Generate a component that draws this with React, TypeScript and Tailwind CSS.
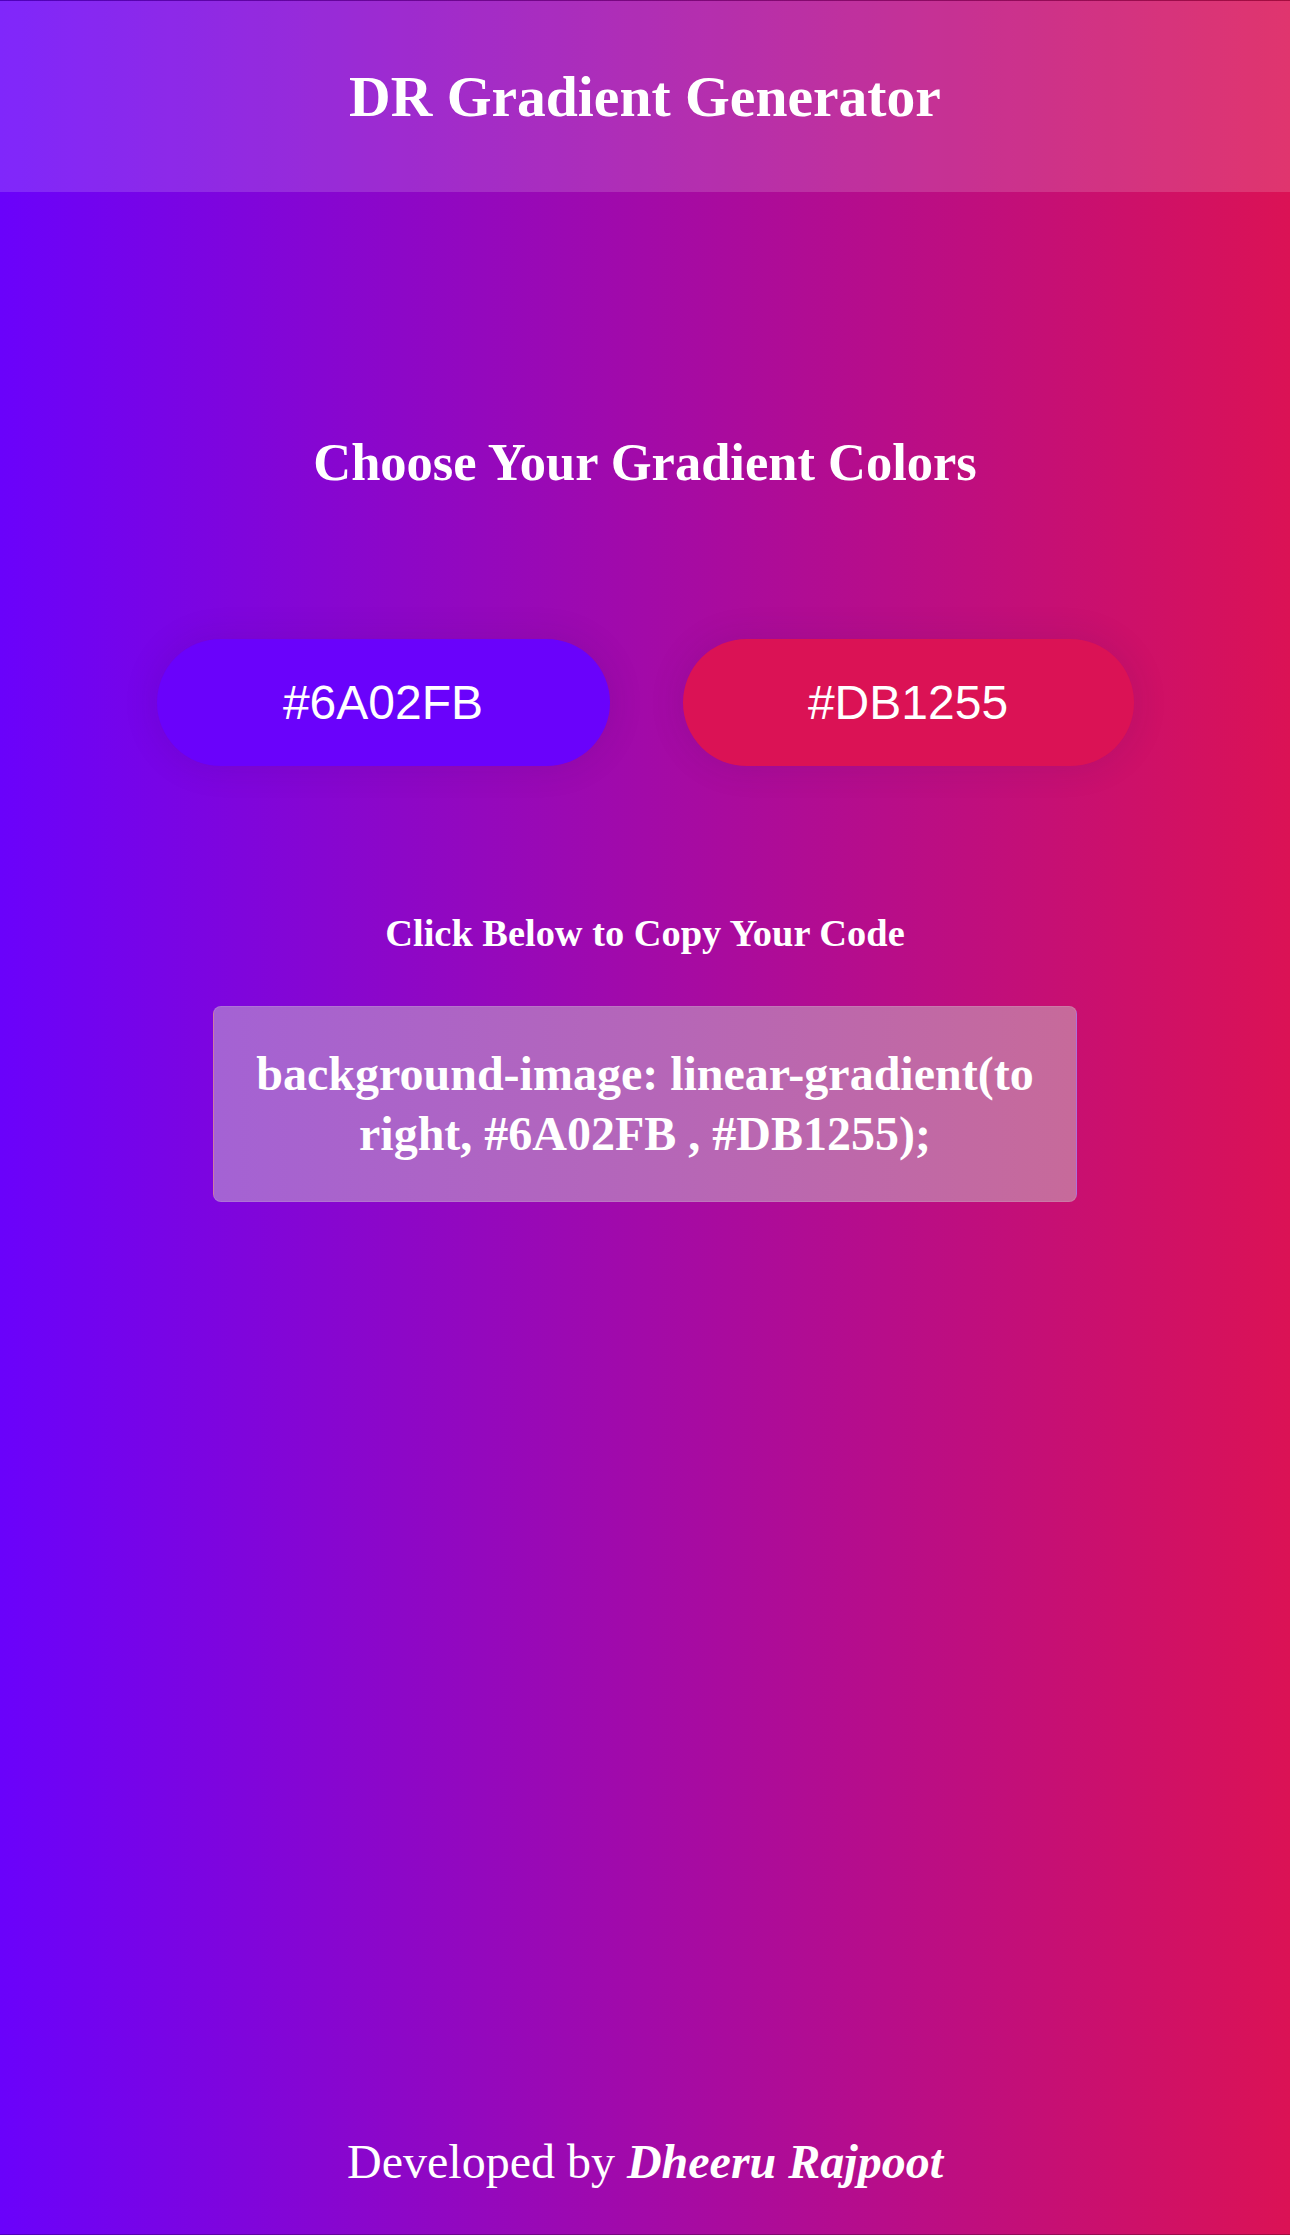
import React from "react";

export default function App() {
  const serif = { fontFamily: '"Liberation Serif", "Times New Roman", serif' };
  return (
    <div
      className="min-h-screen flex flex-col border-t border-b border-black/25 text-white bg-[linear-gradient(to_right,#6A02FB,#DB1255)]"
      style={serif}
    >
      <header className="h-[191px] bg-white/15 flex items-center justify-center">
        <h1 className="text-[57.6px] leading-[66px] font-bold">DR Gradient Generator</h1>
      </header>

      <main className="flex flex-col items-center">
        <h2 className="mt-[239px] text-[52.5px] leading-[62px] font-bold">Choose Your Gradient Colors</h2>

        <div className="mt-[146px] flex gap-[73px]">
          <div
            className="w-[453px] h-[127px] rounded-full bg-[#6A02FB] flex items-center justify-center text-[48px] shadow-[0_0_36px_rgba(40,0,80,0.12)]"
            style={{ fontFamily: '"Liberation Sans", Arial, sans-serif' }}
          >
            #6A02FB
          </div>
          <div
            className="w-[451px] h-[127px] rounded-full bg-[#DB1255] flex items-center justify-center text-[48px] shadow-[0_0_36px_rgba(40,0,80,0.12)]"
            style={{ fontFamily: '"Liberation Sans", Arial, sans-serif' }}
          >
            #DB1255
          </div>
        </div>

        <h3 className="mt-[145px] text-[38.4px] leading-[44px] font-bold">Click Below to Copy Your Code</h3>

        <div className="mt-[51px] w-[864px] h-[196px] rounded-[8px] border border-white/10 bg-[linear-gradient(to_right,#a462d4,#b566b9,#c76a9a)] px-[30px] flex items-center justify-center">
          <p className="text-[48px] leading-[60px] font-bold text-center">
            background-image: linear-gradient(to right, #6A02FB , #DB1255);
          </p>
        </div>
      </main>

      <footer className="mt-auto mb-[45px] flex justify-center">
        <p className="text-[48px] leading-[55px]">
          Developed by <span className="font-bold italic">Dheeru Rajpoot</span>
        </p>
      </footer>
    </div>
  );
}
